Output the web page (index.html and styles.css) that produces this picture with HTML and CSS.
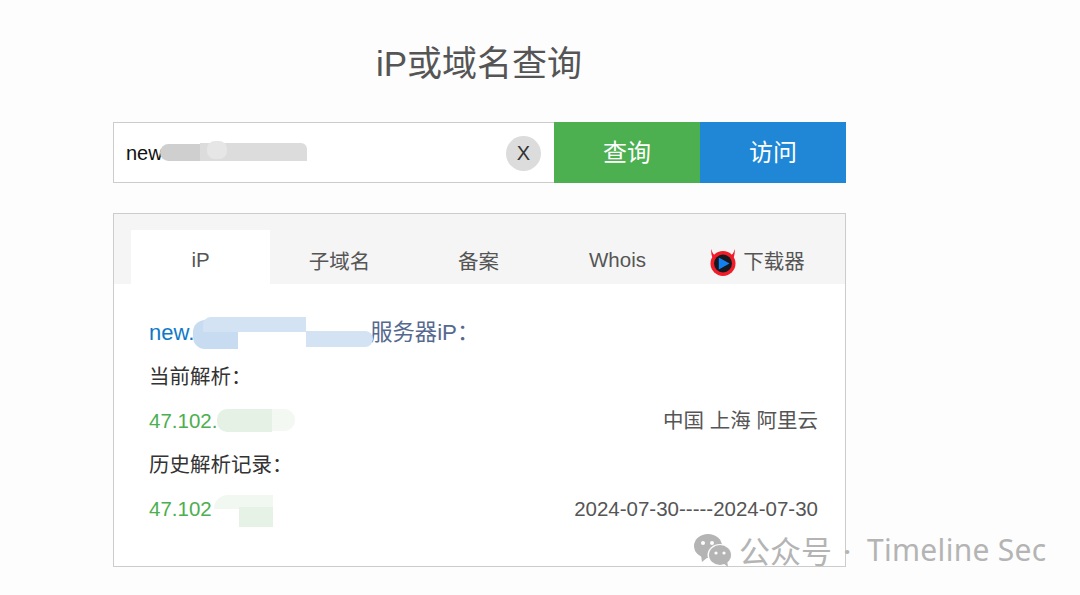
FILE: index.html
```html
<!DOCTYPE html>
<html lang="zh">
<head>
<meta charset="utf-8">
<title>iP或域名查询</title>
<link rel="stylesheet" href="styles.css">
</head>
<body>
<main class="page">
  <h1 class="title">iP或域名查询</h1>
  <div class="search">
    <div class="input">
      <span class="input-text">new</span>
      <span class="blur blur-input"><i class="b1"></i><i class="b2"></i><i class="b3"></i></span>
      <span class="clear">X</span>
    </div>
    <div class="btn btn-green">查询</div>
    <div class="btn btn-blue">访问</div>
  </div>
  <section class="panel">
    <nav class="tabs">
      <div class="tab active">iP</div>
      <div class="tab">子域名</div>
      <div class="tab">备案</div>
      <div class="tab">Whois</div>
      <div class="tab tab-dl">
        <svg class="devil" width="26" height="28" viewBox="0 0 26 28">
          <path d="M1.5 1 C2 5 4 7 6 8 L3 11 C1.5 8 0.8 4 1.5 1Z M24.5 1 C24 5 22 7 20 8 L23 11 C24.5 8 25.2 4 24.5 1Z" fill="#f01c28"/>
          <circle cx="13" cy="15.500" r="12.500" fill="#f01c28"/>
          <circle cx="13" cy="15.500" r="9" fill="#15181f"/>
          <path d="M8.800 9.500 L19.500 15.500 L8.800 21.500Z" fill="#1380f0"/>
        </svg>
        <span>下载器</span>
      </div>
    </nav>
    <div class="body">
      <div class="row row-head"><span class="domain">new.</span><span class="head-gap"></span><span class="head-label">服务器iP：</span>
        <span class="blur blur-domain"><i class="d1"></i><i class="d2"></i><i class="d3"></i></span>
      </div>
      <div class="row">当前解析：</div>
      <div class="row row-split">
        <span class="ip">47.102.</span><span class="meta">中国 上海 阿里云</span>
        <span class="blur blur-ip1"><i class="g1"></i><i class="g2"></i></span>
      </div>
      <div class="row">历史解析记录：</div>
      <div class="row row-split">
        <span class="ip">47.102</span><span class="meta">2024-07-30-----2024-07-30</span>
        <span class="blur blur-ip2"><i class="h1"></i><i class="h2"></i></span>
      </div>
    </div>
  </section>
</main>
<div class="mark">
  <svg class="wechat" width="40" height="34" viewBox="0 0 40 34">
    <ellipse cx="15" cy="13" rx="14" ry="12" fill="#b4b4b4"/>
    <path d="M8 22 L9 29 L15 24Z" fill="#b4b4b4"/>
    <ellipse cx="27" cy="22" rx="12.500" ry="11" fill="#fdfdfd"/>
    <ellipse cx="27" cy="22" rx="11" ry="10" fill="#b4b4b4"/>
    <path d="M30 30 L35 34 L34 27Z" fill="#b4b4b4"/>
    <circle cx="10" cy="10" r="2" fill="#fdfdfd"/>
    <circle cx="19" cy="10" r="2" fill="#fdfdfd"/>
    <circle cx="23" cy="20" r="1.600" fill="#fdfdfd"/>
    <circle cx="31" cy="20" r="1.600" fill="#fdfdfd"/>
  </svg>
  <span class="mark-cn">公众号</span><span class="mark-dot">·</span><span class="mark-en">Timeline Sec</span>
</div>
</body>
</html>
```
FILE: styles.css
```css
* { box-sizing: border-box; }
html, body { margin: 0; height: 595px; overflow: hidden; }
body {
  position: relative;
  background: #fdfdfd;
  font-family: "Liberation Sans", "Noto Sans CJK SC", sans-serif;
  color: #333;
}
.page { width: 733px; margin-left: 113px; padding-top: 42px; }
.title {
  margin: 0 0 36px;
  height: 44px;
  line-height: 44px;
  font-size: 35px;
  font-weight: 400;
  text-align: center;
  color: #555;
  transform: translateX(-0.5px);
}
.search { display: flex; height: 61px; }
.input {
  position: relative;
  flex: 0 0 441px;
  display: flex;
  align-items: center;
  justify-content: space-between;
  padding: 1px 13px 0 12px;
  background: #fff;
  border: 1px solid #ccc;
  border-right: 0;
}
.input-text { font-size: 20px; color: #111; }
.clear {
  width: 35px;
  height: 35px;
  border-radius: 50%;
  background: #dcdcdc;
  color: #333;
  font-size: 20px;
  line-height: 35px;
  text-align: center;
}
.btn {
  flex: 0 0 146px;
  color: #fff;
  font-size: 24px;
  line-height: 61px;
  text-align: center;
}
.btn-green { background: #4caf50; }
.btn-blue { background: #1f87d6; }
.panel {
  margin-top: 30px;
  height: 354px;
  background: #fff;
  border: 1px solid #ccc;
}
.tabs {
  display: flex;
  height: 70px;
  padding: 16px 18px 0 17px;
  background: #f5f5f5;
}
.tab {
  flex: 0 0 139px;
  display: flex;
  align-items: center;
  justify-content: center;
  font-size: 20.500px;
  color: #555;
  padding-top: 6px;
}
.tab.active { background: #fff; }
.tab-dl { gap: 7px; padding-left: 2px; }
.devil { margin-top: 3px; }
.body { padding: 26px 27px 0 35px; }
.row {
  position: relative;
  height: 44px;
  line-height: 44px;
  font-size: 20.500px;
  color: #333;
}
.row-head { display: flex; font-size: 22px; height: 45px; line-height: 45px; }
.row-split { display: flex; justify-content: space-between; }
.domain { color: #0f79c9; }
.head-gap { width: 176px; }
.head-label { color: #55698f; font-size: 22.300px; }
.ip { color: #4caf50; }
.meta { color: #555; }
.blur { position: absolute; display: block; }
.blur i { position: absolute; display: block; }
.blur-input { left: 46px; top: 20px; width: 190px; height: 24px; }
.b1 { left: 0; top: 1px; width: 45px; height: 17px; background: #cfcfcf; border-radius: 9px 0 0 9px; }
.b2 { left: 40px; top: 0; width: 107px; height: 18px; background: #dcdcdc; border-radius: 0 6px 0 0; }
.b3 { left: 47px; top: -2px; width: 20px; height: 18px; background: #e6e6e6; border-radius: 8px; }
.blur-domain { left: 44px; top: 7px; width: 190px; height: 32px; }
.d1 { left: 0; top: 3px; width: 45px; height: 29px; background: #c7dcf1; border-radius: 12px 0 0 12px; }
.d2 { left: 10px; top: 0; width: 103px; height: 15px; background: #d3e3f4; border-radius: 8px 0 0 0; }
.d3 { left: 113px; top: 14px; width: 67px; height: 16px; background: #d3e3f4; border-radius: 0 8px 8px 0; }
.blur-ip1 { left: 68px; top: 10px; width: 80px; height: 23px; }
.g1 { left: 0; top: 0; width: 55px; height: 23px; background: #e6f1e6; border-radius: 10px 0 0 10px; }
.g2 { left: 55px; top: 0; width: 23px; height: 22px; background: #f3f8f3; border-radius: 0 11px 11px 0; }
.blur-ip2 { left: 65px; top: 8px; width: 60px; height: 32px; }
.h1 { left: 0; top: 0; width: 59px; height: 14px; background: #f1f7f1; border-radius: 14px 0 0 0; }
.h2 { left: 25px; top: 12px; width: 34px; height: 20px; background: #e7f2e7; }
.mark {
  position: absolute;
  left: 693px;
  top: 532px;
  display: flex;
  align-items: center;
  height: 36px;
  color: #b4b4b4;
  white-space: nowrap;
}
.wechat { flex: none; }
.mark-cn { margin-left: 6px; font-size: 31px; font-family: "Noto Sans CJK SC", sans-serif; line-height: 36px; }
.mark-dot { width: 35px; padding-right: 5px; text-align: center; font-size: 24px; font-weight: 700; font-family: "Noto Sans", sans-serif; }
.mark-en { font-size: 30px; font-family: "Noto Sans", sans-serif; line-height: 36px; letter-spacing: 0.300px; }
```
